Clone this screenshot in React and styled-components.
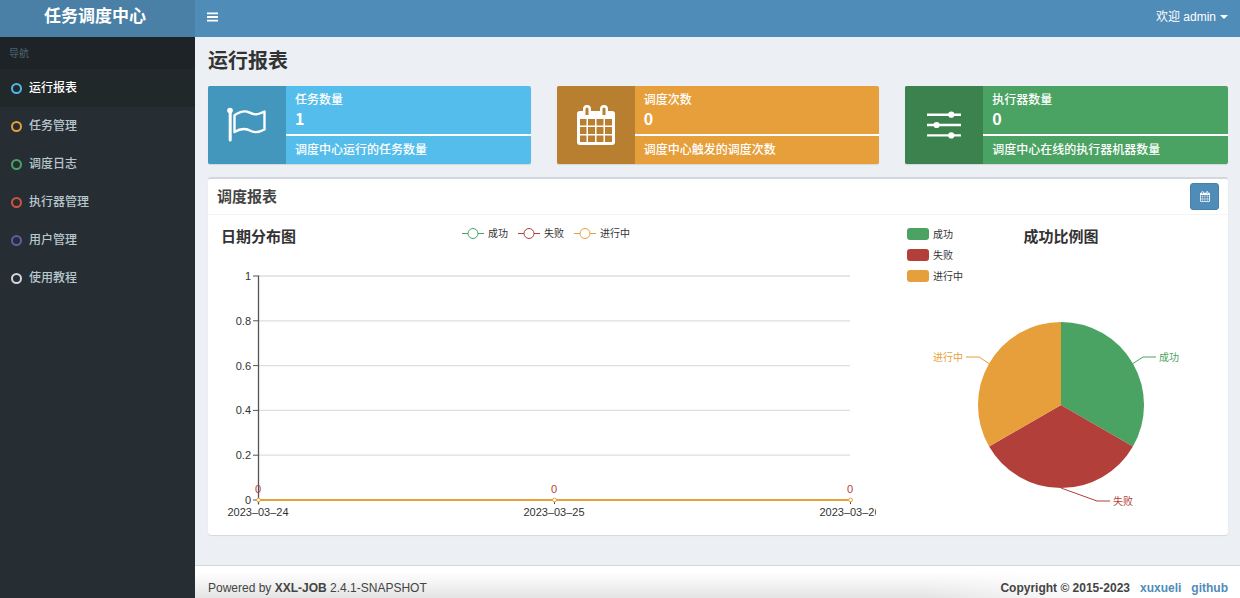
import React from "react";
import styled, { createGlobalStyle } from "styled-components";

const GREEN = "#4aa362";
const RED = "#b23f39";
const ORANGE = "#e69f3a";

const GlobalStyle = createGlobalStyle`
  *, *::before, *::after { box-sizing: border-box; }
  body {
    margin: 0;
    font-family: "Liberation Sans", "Noto Sans CJK SC", sans-serif;
    font-size: 12px;
    line-height: 18px;
    color: #333;
    background: #ecf0f5;
  }
  h1, h2, h3, p, ul { margin: 0; padding: 0; }
  button { font: inherit; border: 0; background: none; padding: 0; cursor: pointer; }
  a { text-decoration: none; color: inherit; }
`;

const Layout = styled.div`
  display: grid;
  grid-template-columns: 195px minmax(0, 1fr);
  grid-template-rows: 37px 1fr;
  min-height: 100vh;
`;

const Logo = styled.a`
  background: #4a7fa6;
  color: #fff;
  font-size: 17px;
  line-height: 34px;
  font-weight: 700;
  text-align: center;
  padding-right: 5px;
`;

const Navbar = styled.header`
  display: flex;
  align-items: center;
  justify-content: space-between;
  background: #508cb8;
  color: #fff;
  padding: 0 12px 4px;
`;

const IconButton = styled.button`
  display: flex;
  color: #fff;
`;

const UserMenu = styled.button`
  display: flex;
  align-items: center;
  gap: 4px;
  color: #fff;
`;

const Caret = styled.span`
  border: 4px solid transparent;
  border-top-color: #fff;
  border-bottom: 0;
`;

const Sidebar = styled.nav`
  background: #262d33;
`;

const NavHeading = styled.h3`
  height: 32px;
  padding: 8px 9px;
  font-size: 10px;
  font-weight: 400;
  color: #4b646f;
  background: #1e2327;
`;

const NavList = styled.ul`
  list-style: none;
`;

const NavLink = styled.a`
  display: flex;
  align-items: center;
  gap: 7px;
  height: 38px;
  padding-left: 11px;
  line-height: 20px;
  color: ${(p) => (p.$active ? "#fff" : "#b8c7ce")};
  background: ${(p) => (p.$active ? "#212829" : "transparent")};
  font-weight: 500;
`;

const Ring = styled.span`
  width: 11px;
  height: 11px;
  border: 2px solid ${(p) => p.$color};
  border-radius: 50%;
`;

const Page = styled.div`
  display: flex;
  flex-direction: column;
  min-width: 0;
`;

const Main = styled.main`
  flex: 1;
  padding: 12px 12px 30px 13px;
`;

const PageTitle = styled.h1`
  font-size: 20px;
  line-height: 25px;
  font-weight: 700;
  margin-bottom: 12px;
`;

const Cards = styled.section`
  display: grid;
  grid-template-columns: repeat(3, minmax(0, 1fr));
  gap: 26px;
  margin-bottom: 13px;
`;

const Card = styled.article`
  display: flex;
  height: 78px;
  color: #fff;
  background: ${(p) => p.$color};
  border-radius: 2px;
  overflow: hidden;
  box-shadow: 0 1px 1px rgba(0, 0, 0, 0.1);
`;

const CardIcon = styled.div`
  display: flex;
  align-items: center;
  justify-content: center;
  width: 78px;
  background: ${(p) => p.$color};
`;

const CardBody = styled.div`
  flex: 1;
  font-weight: 500;
`;

const CardLabel = styled.p`
  padding: 5px 9px 0;
`;

const CardValue = styled.p`
  padding: 0 9px;
  height: 25px;
  font-size: 16px;
  line-height: 18px;
  font-weight: 700;
  font-family: "Noto Sans CJK SC", sans-serif;
`;

const CardNote = styled.p`
  padding: 5px 9px 0;
  border-top: 2px solid #fff;
`;

const Box = styled.section`
  background: #fff;
  border-top: 2px solid #d2d6de;
  border-radius: 3px;
  box-shadow: 0 1px 1px rgba(0, 0, 0, 0.1);
`;

const BoxHeader = styled.header`
  display: flex;
  align-items: center;
  justify-content: space-between;
  height: 36px;
  padding: 0 9px;
  border-bottom: 1px solid #f4f4f4;
`;

const BoxTitle = styled.h2`
  font-size: 15px;
  font-weight: 700;
  color: #444;
`;

const DateButton = styled.button`
  display: flex;
  align-items: center;
  justify-content: center;
  width: 29px;
  height: 27px;
  color: #fff;
  background: #508cb8;
  border: 1px solid #4a7fa6;
  border-radius: 3px;
`;

const BoxBody = styled.div`
  display: grid;
  grid-template-columns: minmax(0, 2fr) minmax(0, 1fr);
  height: 320px;
`;

const Chart = styled.svg`
  display: block;
  width: 100%;
  height: 100%;
  font-family: "Liberation Sans", "Noto Sans CJK SC", sans-serif;
`;

const ChartTitle = styled.text`
  font-size: 15px;
  font-weight: 700;
  fill: #333;
`;

const ChartText = styled.text`
  font-size: ${(p) => (p.$small ? 10 : 11)}px;
  fill: ${(p) => p.$color || "#333"};
`;

const Footer = styled.footer`
  display: flex;
  justify-content: space-between;
  height: 33px;
  padding: 13px 12px 0 13px;
  color: #444;
  border-top: 1px solid #d2d6de;
  background:
    linear-gradient(90deg, transparent 70%, #fff 88%),
    linear-gradient(#fff 20%, #e4e4e4);
`;

const Copyright = styled.div`
  display: flex;
  gap: 10px;
  font-weight: 700;
`;

const FooterLink = styled.a`
  color: #508cb8;
`;

const MenuIcon = () => (
  <svg width="11" height="10" viewBox="0 0 11 10" aria-hidden="true">
    <path d="M0 1.3h11M0 5h11M0 8.7h11" stroke="currentColor" strokeWidth="1.8" />
  </svg>
);

const FlagIcon = () => (
  <svg width="40" height="36" viewBox="0 0 40 36" fill="none" stroke="#fff">
    <circle cx="3" cy="3.5" r="2.8" fill="#fff" stroke="none" />
    <path d="M3.2 4v29" strokeWidth="3" strokeLinecap="round" />
    <path
      d="M7.5 8.2C12 5.200 17 2.800 22 5.400C28 8.700 31 7.500 37.500 4.500V22.500C33 25 29 26.500 24 24C18 20.500 13 21.500 7.500 25Z"
      strokeWidth="2.400"
      strokeLinejoin="round"
    />
  </svg>
);

const CalendarIcon = ({ width = 38, height = 40 }) => (
  <svg width={width} height={height} viewBox="0 0 38 40" aria-hidden="true">
    <path
      fillRule="evenodd"
      fill="#fff"
      d="M3 6h3V4a4 4 0 0 1 8 0v2h9V4a4 4 0 0 1 8 0v2h4a3 3 0 0 1 3 3v28a3 3 0 0 1-3 3H3a3 3 0 0 1-3-3V9a3 3 0 0 1 3-3ZM8.500 4v6h3V4a1.500 1.500 0 0 0-3 0ZM25.500 4v6h3V4a1.500 1.500 0 0 0-3 0ZM3 14v6.500h6.500v-6.500ZM11 14v6.500h7v-6.500ZM19.500 14v6.500h7v-6.500ZM28 14v6.500h7v-6.500ZM3 22v7h6.500v-7ZM11 22v7h7v-7ZM19.500 22v7h7v-7ZM28 22v7h7v-7ZM3 30.500v6.500h6.500v-6.500ZM11 30.500v6.500h7v-6.500ZM19.500 30.500v6.500h7v-6.500ZM28 30.500v6.500h7v-6.500Z"
    />
  </svg>
);

const SlidersIcon = () => (
  <svg width="34" height="28" viewBox="0 0 34 28" fill="#fff">
    <path d="M0 2.500h34v2.400H0zM0 12.800h34v2.400H0zM0 23.200h34v2.400H0z" />
    <circle cx="24.300" cy="3.700" r="3.100" />
    <circle cx="9.600" cy="14" r="3.100" />
    <circle cx="24.300" cy="24.400" r="3.100" />
  </svg>
);

const NAV = [
  ["运行报表", "#4fb8e6"],
  ["任务管理", "#e69f3a"],
  ["调度日志", "#4aa362"],
  ["执行器管理", "#cf5340"],
  ["用户管理", "#605ca8"],
  ["使用教程", "#d2d6de"],
];

const CARDS = [
  { label: "任务数量", value: 1, note: "调度中心运行的任务数量", color: "#54bdeb", dark: "#4497bc", icon: <FlagIcon /> },
  { label: "调度次数", value: 0, note: "调度中心触发的调度次数", color: ORANGE, dark: "#b97f30", icon: <CalendarIcon /> },
  { label: "执行器数量", value: 0, note: "调度中心在线的执行器机器数量", color: GREEN, dark: "#3b824e", icon: <SlidersIcon /> },
];

const LINE_LEGEND = [
  ["成功", GREEN, 254],
  ["失败", RED, 310],
  ["进行中", ORANGE, 366],
];

const PIE_LEGEND = [
  ["成功", GREEN],
  ["失败", RED],
  ["进行中", ORANGE],
];

const TICKS = ["1", "0.8", "0.6", "0.4", "0.2", "0"];

const DATES = [
  ["2023–03–24", 50],
  ["2023–03–25", 346],
  ["2023–03–26", 642],
];

/* Line chart of the runs for each day. The last date runs past the plot's edge. */
const DailyChart = () => (
  <Chart viewBox="0 1 668 320" preserveAspectRatio="xMinYMin meet" role="img" aria-label="日期分布图">
    <ChartTitle x="13" y="28">日期分布图</ChartTitle>
    {LINE_LEGEND.map(([name, color, x]) => (
      <g key={name}>
        <path d={`M${x} 19.500h22`} stroke={color} />
        <circle cx={x + 11} cy="19.500" r="5" fill="#fff" stroke={color} />
        <ChartText $small x={x + 26} y="23">{name}</ChartText>
      </g>
    ))}
    {TICKS.map((tick, i) => (
      <g key={tick}>
        {i < 5 && <path d={`M50 ${62 + i * 44.8}h592`} stroke="#ddd" strokeWidth="1.300" />}
        <path d={`M45 ${62 + i * 44.8}h5`} stroke="#555" />
        <ChartText x="43" y={66 + i * 44.8} textAnchor="end">{tick}</ChartText>
      </g>
    ))}
    <path d="M50.500 61.500v229" stroke="#555" strokeWidth="1.300" />
    <path d="M50 286h592" stroke={ORANGE} strokeWidth="2" />
    {DATES.map(([date, x]) => (
      <g key={date}>
        <path d={`M${x + 0.5} 286v4`} stroke="#444" />
        <circle cx={x + 0.5} cy="286" r="1.900" fill="#fff" stroke={ORANGE} />
        <ChartText x={x} y="279" textAnchor="middle" $color={RED}>0</ChartText>
      </g>
    ))}
    <svg width="668" height="321" viewBox="0 0 668 321">
      {DATES.map(([date, x]) => (
        <ChartText key={date} x={x} y="302" textAnchor="middle">{date}</ChartText>
      ))}
    </svg>
  </Chart>
);

/* Pie chart of the share of each result. */
const RatioChart = () => (
  <Chart viewBox="0 1 340 320" preserveAspectRatio="xMidYMin meet" role="img" aria-label="成功比例图">
    {PIE_LEGEND.map(([name, color], i) => (
      <g key={name}>
        <rect x="19" y={14 + i * 21} width="22" height="12" rx="3" fill={color} />
        <ChartText $small x="45" y={24 + i * 21}>{name}</ChartText>
      </g>
    ))}
    <ChartTitle x="173" y="28" textAnchor="middle">成功比例图</ChartTitle>
    <path d="M173 191V108A83 83 0 0 1 244.900 232.500Z" fill={GREEN} />
    <path d="M173 191L244.900 232.500A83 83 0 0 1 101.100 232.500Z" fill={RED} />
    <path d="M173 191L101.100 232.500A83 83 0 0 1 173 108Z" fill={ORANGE} />
    <g fill="none">
      <path d="M245 149.500l10-6.500h13" stroke={GREEN} />
      <path d="M101 149.500l-10-6.500h-13" stroke={ORANGE} />
      <path d="M173 274l36 13h13" stroke={RED} />
    </g>
    <ChartText $small $color={GREEN} x="271" y="147">成功</ChartText>
    <ChartText $small $color={ORANGE} x="75" y="147" textAnchor="end">进行中</ChartText>
    <ChartText $small $color={RED} x="225" y="291">失败</ChartText>
  </Chart>
);

export default function App() {
  return (
    <>
      <GlobalStyle />
      <Layout>
        <Logo href="#">任务调度中心</Logo>
        <Navbar>
          <IconButton type="button" aria-label="切换导航"><MenuIcon /></IconButton>
          <UserMenu type="button">欢迎 admin <Caret /></UserMenu>
        </Navbar>
        <Sidebar>
          <NavHeading>导航</NavHeading>
          <NavList>
            {NAV.map(([name, color], i) => (
              <li key={name}>
                <NavLink href="#" $active={i === 0}>
                  <Ring $color={color} />
                  {name}
                </NavLink>
              </li>
            ))}
          </NavList>
        </Sidebar>
        <Page>
          <Main>
            <PageTitle>运行报表</PageTitle>
            <Cards>
              {CARDS.map((c) => (
                <Card key={c.label} $color={c.color}>
                  <CardIcon $color={c.dark}>{c.icon}</CardIcon>
                  <CardBody>
                    <CardLabel>{c.label}</CardLabel>
                    <CardValue>{c.value}</CardValue>
                    <CardNote>{c.note}</CardNote>
                  </CardBody>
                </Card>
              ))}
            </Cards>
            <Box>
              <BoxHeader>
                <BoxTitle>调度报表</BoxTitle>
                <DateButton type="button" aria-label="选择日期"><CalendarIcon width={10} height={11} /></DateButton>
              </BoxHeader>
              <BoxBody>
                <DailyChart />
                <RatioChart />
              </BoxBody>
            </Box>
          </Main>
          <Footer>
            <div>Powered by <b>XXL-JOB</b> 2.4.1-SNAPSHOT</div>
            <Copyright>
              <span>Copyright © 2015-2023</span>
              <FooterLink href="#">xuxueli</FooterLink>
              <FooterLink href="#">github</FooterLink>
            </Copyright>
          </Footer>
        </Page>
      </Layout>
    </>
  );
}
